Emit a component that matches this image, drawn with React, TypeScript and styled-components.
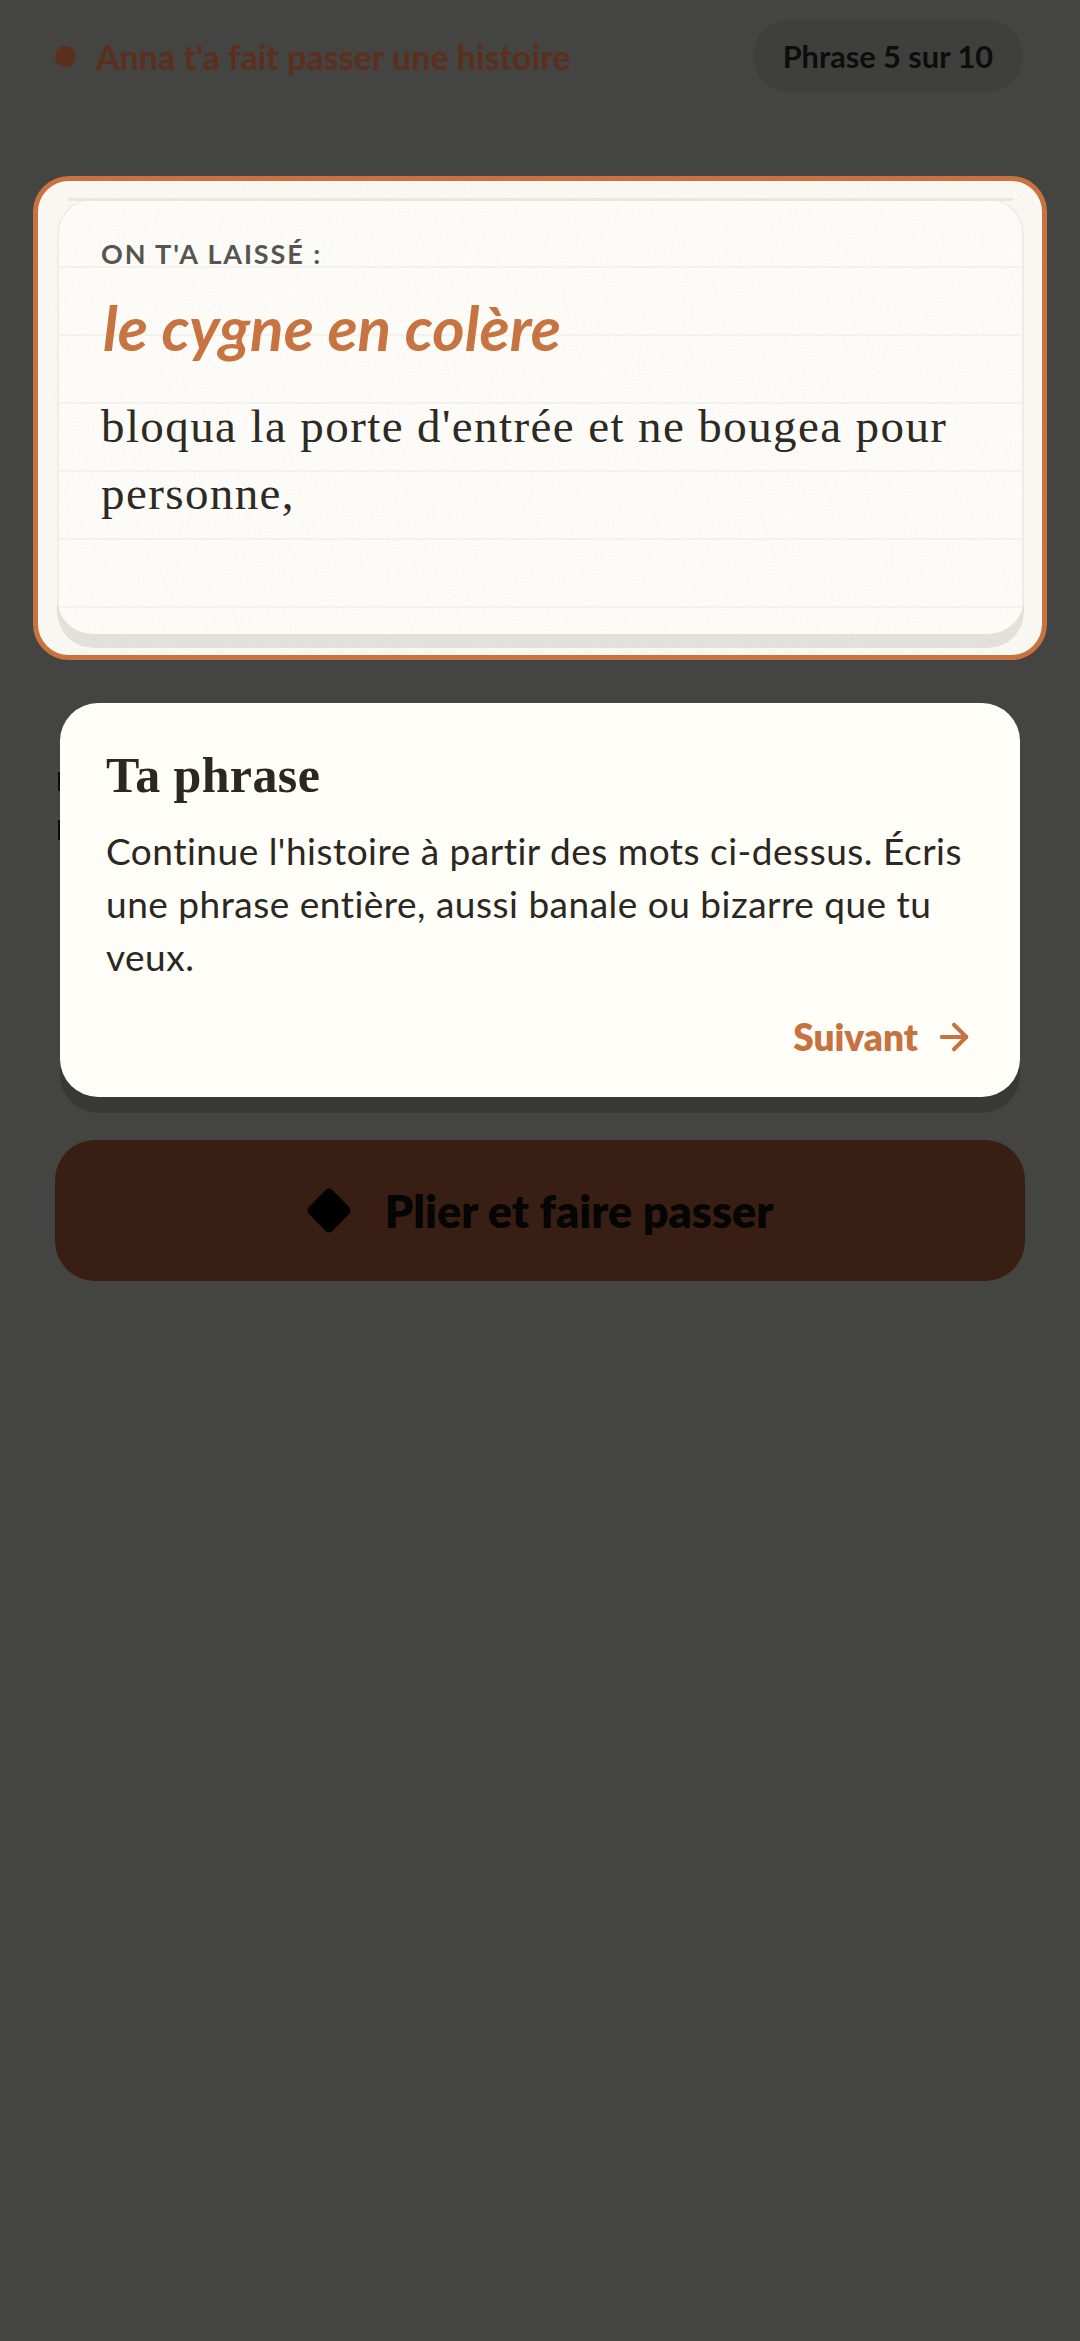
import React from 'react';
import styled, { createGlobalStyle } from 'styled-components';
import { ArrowRight } from 'lucide-react';

const GlobalStyle = createGlobalStyle`
  html, body {
    margin: 0;
    padding: 0;
    background: #444442;
  }
  * {
    box-sizing: border-box;
  }
`;

const sans = `Lato, "Open Sans", sans-serif`;
const serif = `"Liberation Serif", "DejaVu Serif", serif`;

const Page = styled.div`
  width: 1080px;
  height: 2341px;
  background: #444442;
  overflow: hidden;
  padding: 20px 33px 0;
`;

const TopBar = styled.header`
  display: flex;
  align-items: center;
  justify-content: space-between;
  height: 72px;
  padding: 0 24px 0 22px;
`;

const Sender = styled.div`
  display: flex;
  align-items: center;
  gap: 20px;
`;

const Dot = styled.span`
  width: 21px;
  height: 21px;
  border-radius: 50%;
  background: #5c2f1c;
`;

const SenderName = styled.span`
  font: 700 34px ${sans};
  color: #5c2f1c;
`;

const Counter = styled.span`
  display: flex;
  align-items: center;
  height: 72px;
  padding: 0 30px;
  border-radius: 36px;
  background: #3f3f3d;
  font: 700 30.7px ${sans};
  color: #0d0d0c;
`;

const StoryCard = styled.section`
  position: relative;
  margin-top: 84px;
  height: 484px;
  border: 5px solid #c8733f;
  border-radius: 36px;
  background: #faf8f2;
  padding: 17px 18px 7px 19px;
`;

const Grain = styled.svg`
  position: absolute;
  inset: 0;
  width: 100%;
  height: 100%;
  border-radius: 31px;
  opacity: 0.16;
  pointer-events: none;
`;

const Sheet = styled.div`
  position: relative;
  height: 100%;
  padding: 39px 42px 0 44px;
  border-radius: 36px;
  box-shadow: inset 0 -14px 0 #e4e1da, inset 0 0 0 2px #f0eee8;
  background-color: #fdfcf8;
  background-image: linear-gradient(to bottom, transparent 66px, #f5f3ee 66px);
  background-size: 100% 68px;
  background-position: 0 2px;

  &::before {
    content: '';
    position: absolute;
    top: 0;
    left: 11px;
    right: 11px;
    height: 3px;
    background: #e9e7e0;
  }
`;

const Eyebrow = styled.div`
  font: 700 27px/34px ${sans};
  letter-spacing: 1.9px;
  color: #55534e;
`;

const Quote = styled.div`
  margin-top: 18px;
  padding-left: 2px;
  font: italic 700 62px/76px ${sans};
  color: #c8733f;
`;

const Continuation = styled.p`
  margin: 28px 0 0;
  font: 400 47px/67px ${serif};
  letter-spacing: 1.4px;
  color: #2b2721;
`;

const Composer = styled.section`
  position: relative;
  height: 480px;
`;

const Peek = styled.span<{ $top: number; $height: number }>`
  position: absolute;
  left: 25px;
  top: ${(p) => p.$top}px;
  width: 2px;
  height: ${(p) => p.$height}px;
  background: #0c0c0b;
`;

const Coach = styled.div`
  position: absolute;
  top: 43px;
  left: 27px;
  width: 960px;
  height: 394px;
  padding: 44px 46px 0;
  border-radius: 38px;
  background: #fffef9;
  box-shadow: 0 16px 0 #383836;
`;

const CoachTitle = styled.h2`
  margin: 0;
  font: 700 50px/56px ${serif};
  letter-spacing: 0.4px;
  color: #2b2721;
`;

const CoachText = styled.p`
  margin: 21px 0 0;
  font: 400 37px/53px ${sans};
  letter-spacing: 0.5px;
  color: #2b2721;
`;

const NextRow = styled.div`
  display: flex;
  align-items: center;
  justify-content: flex-end;
  gap: 15px;
  margin: 32px -1px 0 0;
  font: 800 37px/44px ${sans};
  color: #c8733f;
`;

const SubmitButton = styled.button`
  display: flex;
  align-items: center;
  justify-content: center;
  gap: 34px;
  width: 970px;
  height: 141px;
  margin-left: 22px;
  border: 0;
  border-radius: 40px;
  background: #391f13;
  font: 800 45px ${sans};
  color: #050505;
`;

const FoldIcon = () => (
  <svg width="44" height="45" viewBox="0 0 44 45" aria-hidden="true">
    <path
      d="M18.6 2 L2 19 a5 5 0 0 0 0 7 L18.6 43 a4.8 4.8 0 0 0 6.8 0 L42 26 a5 5 0 0 0 0 -7 L25.4 2 a4.8 4.8 0 0 0 -6.8 0 Z"
      fill="#000"
    />
  </svg>
);

export default function App() {
  return (
    <Page>
      <GlobalStyle />
      <TopBar>
        <Sender>
          <Dot />
          <SenderName>Anna t'a fait passer une histoire</SenderName>
        </Sender>
        <Counter>Phrase 5 sur 10</Counter>
      </TopBar>
      <StoryCard>
        <Sheet>
          <Eyebrow>ON T'A LAISSÉ :</Eyebrow>
          <Quote>le cygne en colère</Quote>
          <Continuation>bloqua la porte d'entrée et ne bougea pour personne,</Continuation>
        </Sheet>
        <Grain aria-hidden="true">
          <filter id="paper-grain">
            <feTurbulence type="fractalNoise" baseFrequency="0.7" numOctaves="2" />
            <feColorMatrix values="0 0 0 0 0.5  0 0 0 0 0.48  0 0 0 0 0.42  0 0 0 1.6 -0.75" />
          </filter>
          <rect width="100%" height="100%" filter="url(#paper-grain)" />
        </Grain>
      </StoryCard>
      <Composer>
        <Peek $top={112} $height={19} />
        <Peek $top={160} $height={20} />
        <Coach>
          <CoachTitle>Ta phrase</CoachTitle>
          <CoachText>
            Continue l'histoire à partir des mots ci-dessus. Écris une phrase entière, aussi banale ou bizarre que tu veux.
          </CoachText>
          <NextRow>
            Suivant
            <ArrowRight size={42} strokeWidth={2.3} />
          </NextRow>
        </Coach>
      </Composer>
      <SubmitButton>
        <FoldIcon />
        Plier et faire passer
      </SubmitButton>
    </Page>
  );
}
